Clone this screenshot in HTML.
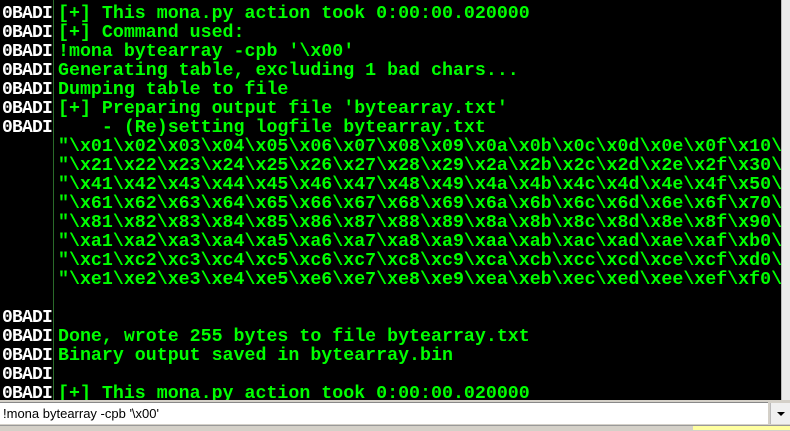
<!DOCTYPE html>
<html><head><style>
body{margin:0;width:790px;height:430px;overflow:hidden;background:#d4d0c8;position:relative}
#log{position:absolute;left:0;top:0;width:781px;height:400px;background:#000;overflow:hidden}
#sb{position:absolute;left:781px;top:0;width:9px;height:400px;background:#ececec;border-left:1px solid #bbb}
#div{position:absolute;left:53px;top:0;width:1px;height:400px;background:#2a6a2a}
.r{position:absolute;left:0;height:19px;white-space:pre;font:bold 18.3px/19px "Liberation Mono",monospace;color:#00ff00}
.l{position:absolute;left:2px;width:50px;overflow:hidden;color:#fff;font:bold 18px/19px "Liberation Mono",monospace;letter-spacing:-0.8px}
.t{position:absolute;left:58px}
#in{position:absolute;left:0;top:402px;width:768px;height:22px;background:#fff;border-top:1px solid #888;font:13px/22px "Liberation Sans",sans-serif;color:#000;padding-left:3px;box-sizing:border-box}
#btn{position:absolute;left:770px;top:403px;width:20px;height:21px;background:#f0f0f0;border-left:1px solid #bbb}
#btn:after{content:"";position:absolute;left:6px;top:9px;border-left:4px solid transparent;border-right:4px solid transparent;border-top:4px solid #000}
#bot{position:absolute;left:0;top:425px;width:790px;height:5px;background:#d4d0c8;border-top:1px solid #999}
#y{position:absolute;left:693px;top:426px;width:97px;height:4px;background:#ffffa0}
</style></head><body>
<div id="log">
<div class="r" style="top:5px"><span class="l">0BADI</span><span class="t">[+] This mona.py action took 0:00:00.020000</span></div>
<div class="r" style="top:24px"><span class="l">0BADI</span><span class="t">[+] Command used:</span></div>
<div class="r" style="top:43px"><span class="l">0BADI</span><span class="t">!mona bytearray -cpb '\x00'</span></div>
<div class="r" style="top:62px"><span class="l">0BADI</span><span class="t">Generating table, excluding 1 bad chars...</span></div>
<div class="r" style="top:81px"><span class="l">0BADI</span><span class="t">Dumping table to file</span></div>
<div class="r" style="top:100px"><span class="l">0BADI</span><span class="t">[+] Preparing output file 'bytearray.txt'</span></div>
<div class="r" style="top:119px"><span class="l">0BADI</span><span class="t">    - (Re)setting logfile bytearray.txt</span></div>
<div class="r" style="top:138px"><span class="t">"\x01\x02\x03\x04\x05\x06\x07\x08\x09\x0a\x0b\x0c\x0d\x0e\x0f\x10\"</span></div>
<div class="r" style="top:157px"><span class="t">"\x21\x22\x23\x24\x25\x26\x27\x28\x29\x2a\x2b\x2c\x2d\x2e\x2f\x30\"</span></div>
<div class="r" style="top:176px"><span class="t">"\x41\x42\x43\x44\x45\x46\x47\x48\x49\x4a\x4b\x4c\x4d\x4e\x4f\x50\"</span></div>
<div class="r" style="top:195px"><span class="t">"\x61\x62\x63\x64\x65\x66\x67\x68\x69\x6a\x6b\x6c\x6d\x6e\x6f\x70\"</span></div>
<div class="r" style="top:214px"><span class="t">"\x81\x82\x83\x84\x85\x86\x87\x88\x89\x8a\x8b\x8c\x8d\x8e\x8f\x90\"</span></div>
<div class="r" style="top:233px"><span class="t">"\xa1\xa2\xa3\xa4\xa5\xa6\xa7\xa8\xa9\xaa\xab\xac\xad\xae\xaf\xb0\"</span></div>
<div class="r" style="top:252px"><span class="t">"\xc1\xc2\xc3\xc4\xc5\xc6\xc7\xc8\xc9\xca\xcb\xcc\xcd\xce\xcf\xd0\"</span></div>
<div class="r" style="top:271px"><span class="t">"\xe1\xe2\xe3\xe4\xe5\xe6\xe7\xe8\xe9\xea\xeb\xec\xed\xee\xef\xf0\"</span></div>
<div class="r" style="top:309px"><span class="l">0BADI</span></div>
<div class="r" style="top:328px"><span class="l">0BADI</span><span class="t">Done, wrote 255 bytes to file bytearray.txt</span></div>
<div class="r" style="top:347px"><span class="l">0BADI</span><span class="t">Binary output saved in bytearray.bin</span></div>
<div class="r" style="top:366px"><span class="l">0BADI</span></div>
<div class="r" style="top:385px"><span class="l">0BADI</span><span class="t">[+] This mona.py action took 0:00:00.020000</span></div>
<div id="div"></div>
</div>
<div id="sb"></div>
<div id="in">!mona bytearray -cpb '\x00'</div>
<div id="btn"></div>
<div id="bot"></div><div id="y"></div>
</body></html>
